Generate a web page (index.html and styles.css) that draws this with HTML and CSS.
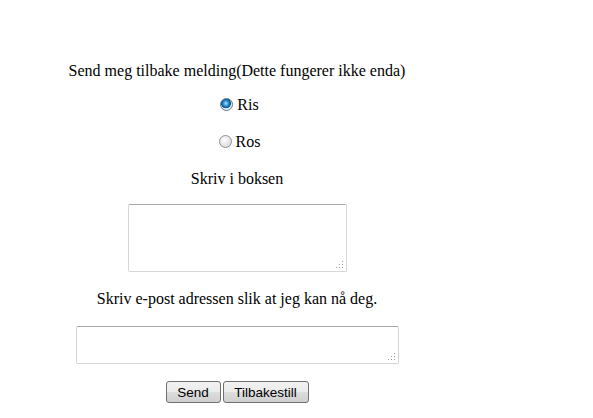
FILE: index.html
```html
<!DOCTYPE html>
<html lang="no">
<head>
    <meta charset="utf-8">
    <title>Send melding</title>
    <link rel="stylesheet" href="styles.css">
</head>
<body>
<form id="melding">
    <p class="title">Send meg tilbake melding(Dette fungerer ikke enda)</p>
    <p class="choice"><label><input type="radio" name="type" value="ris" checked> Ris</label></p>
    <p class="choice ros"><label><input type="radio" name="type" value="ros"> Ros</label></p>
    <p class="label">Skriv i boksen</p>
    <textarea class="box" name="tekst"></textarea>
    <p class="label email">Skriv e-post adressen slik at jeg kan nå deg.</p>
    <textarea class="box small" name="epost"></textarea>
    <div class="buttons">
        <button type="submit" class="send">Send</button>
        <button type="reset" class="reset">Tilbakestill</button>
    </div>
</form>
</body>
</html>
```
FILE: styles.css
```css
body {
    margin: 8px;
    background: #fff;
    font-family: "Liberation Serif", "Times New Roman", serif;
    font-size: 16px;
    color: #000;
}

#melding {
    width: 458px;
    padding-top: 53px;
    display: flex;
    flex-direction: column;
    align-items: center;
    text-align: center;
}

#melding p {
    margin: 0;
    line-height: 19px;
}

#melding .choice {
    margin-top: 15px;
}

#melding .choice.ros {
    margin-top: 17px;
}

#melding .label {
    margin-top: 17px;
}

#melding .label.email {
    margin-top: 17px;
}

#melding label {
    display: inline-flex;
    align-items: center;
    gap: 4px;
}

#melding input[type="radio"] {
    appearance: none;
    -webkit-appearance: none;
    width: 13px;
    height: 13px;
    margin: 0 0 0 5px;
    border-radius: 50%;
    border: 1px solid #8e8f8f;
    background: radial-gradient(circle at 40% 35%, #fdfdfd 0%, #e4e4e4 60%, #cdcdcd 100%);
}

#melding input[type="radio"]:checked {
    border-color: #5a7a98;
    background: radial-gradient(circle at 45% 40%, #a6e4ff 0%, #2a8ed0 30%, #0e4f7e 52%, #dfe9f1 58%, #f4f4f4 100%);
}

/* the little dotted grip in the bottom right corner */
#melding .box {
    display: block;
    box-sizing: border-box;
    width: 219px;
    height: 68px;
    margin: 16px 0 0;
    border: 1px solid #d6d6d6;
    border-top-color: #a9a9a9;
    border-radius: 2px;
    resize: none;
    background-color: #fff;
    background-image:
        linear-gradient(#9d9d9d, #9d9d9d),
        linear-gradient(#9d9d9d, #9d9d9d),
        linear-gradient(#9d9d9d, #9d9d9d),
        linear-gradient(#9d9d9d, #9d9d9d),
        linear-gradient(#9d9d9d, #9d9d9d),
        linear-gradient(#9d9d9d, #9d9d9d);
    background-size: 1px 1px;
    background-repeat: no-repeat;
    background-position:
        right 3px bottom 3px,
        right 6px bottom 3px,
        right 9px bottom 3px,
        right 3px bottom 6px,
        right 6px bottom 6px,
        right 3px bottom 9px;
    font-family: "Liberation Mono", monospace;
    font-size: 13px;
}

#melding .box.small {
    width: 323px;
    height: 38px;
    margin-top: 18px;
}

#melding .buttons {
    margin-top: 17px;
    display: flex;
    gap: 2px;
}

#melding button {
    height: 22px;
    padding: 0;
    border: 1px solid #707070;
    border-radius: 3px;
    background: linear-gradient(#f2f2f2 0%, #ebebeb 48%, #dddddd 52%, #cfcfcf 100%);
    font-family: "Liberation Sans", Arial, sans-serif;
    font-size: 13.5px;
    color: #000;
}

#melding .send {
    width: 55px;
}

#melding .reset {
    width: 86px;
}
```
